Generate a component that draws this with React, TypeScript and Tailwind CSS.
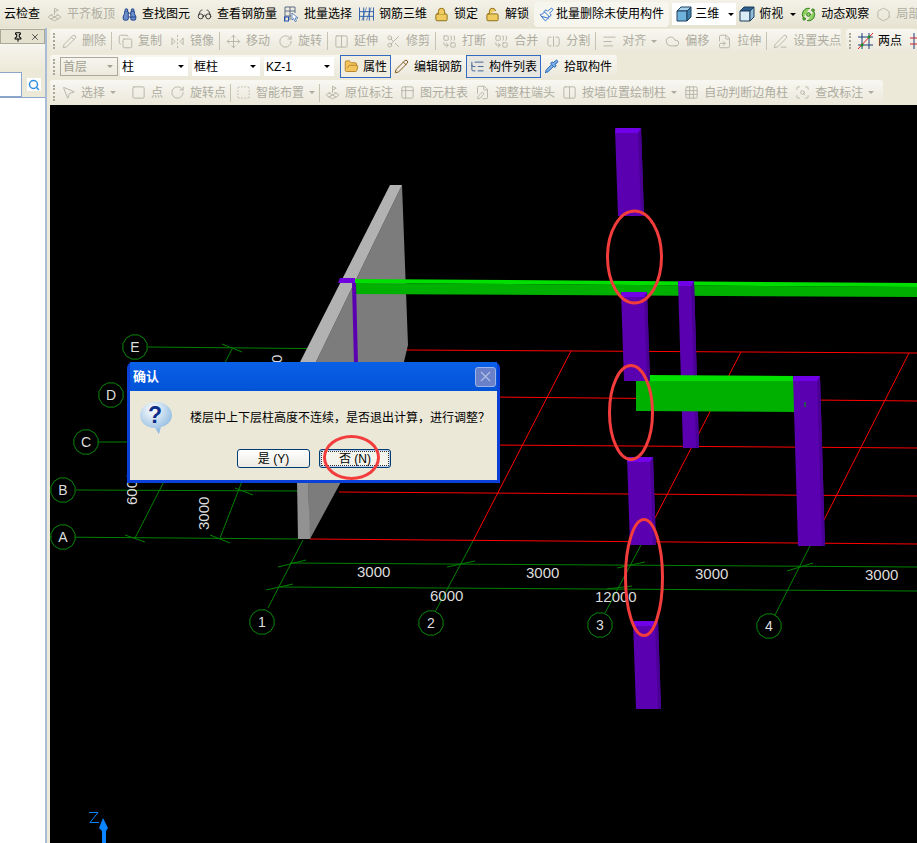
import React from "react";
import {
  Binoculars, Glasses, Lock, LockOpen, Paintbrush, Orbit, Pin, X, Search, MousePointer2,
  Pencil, Copy, FlipHorizontal2, Move, RotateCw, Scissors, Columns2, Combine, SquareSplitHorizontal, AlignLeft,
  Cloud, FileSymlink, Square, ListTree, Pipette, PenLine, FolderOpen, Table2, FileEdit, LandPlot, ScanSearch, SquareDashed, Grid3x3, Hexagon,
} from "lucide-react";

const font = "font-['Liberation_Sans','Noto_Sans_CJK_SC',sans-serif]";
const dark = "text-black";
type Icon = React.ComponentType<{ size?: number; className?: string; strokeWidth?: number }>;

// the program's raster icons that lucide has no match for
const Cube: Icon = () => (
  <svg width="16" height="16" viewBox="0 0 16 16" className="shrink-0">
    <polygon points="1,5 5,1 15,1 11,5" fill="#a8d4ee" stroke="#1c3f5c" />
    <polygon points="1,5 11,5 11,15 1,15" fill="#6fb2dc" stroke="#1c3f5c" />
    <polygon points="11,5 15,1 15,11 11,15" fill="#3f7faa" stroke="#1c3f5c" />
  </svg>
);
const TopView: Icon = () => (
  <svg width="16" height="16" viewBox="0 0 16 16" className="shrink-0">
    <polygon points="1,5 5,1 15,1 11,5" fill="#2f5f8c" stroke="#1c3f5c" />
    <polygon points="1,5 11,5 11,15 1,15" fill="#dcecf6" stroke="#1c3f5c" />
    <polygon points="11,5 15,1 15,11 11,15" fill="#8fbbd8" stroke="#1c3f5c" />
  </svg>
);
const BatchSelect: Icon = () => (
  <svg width="15" height="16" viewBox="0 0 15 16" className="shrink-0" fill="none">
    <path d="M1 1H11M1 5H11M1 10H7M1 1V14M6 1V14M11 1V7" stroke="#5a6b85" />
    <rect x="0.5" y="11" width="4" height="4" stroke="#1f4fb0" />
    <path d="M8 7L14 12H11L12.5 15L11 15.5L9.5 12.5L8 14Z" fill="#fff" stroke="#2a5cab" strokeWidth="0.7" />
  </svg>
);
const SteelGrid: Icon = () => (
  <svg width="15" height="16" viewBox="0 0 16 16" className="shrink-0" fill="none" stroke="#2a5cab">
    <path d="M0.5 1V15M5 1V15M11 1V15M15.5 1V15M0 5.5H16M0 10.5H16" />
    <path d="M3 15L8 1M8 15L13 1" strokeWidth="0.7" />
  </svg>
);
const TwoPoints: Icon = () => (
  <svg width="15" height="16" viewBox="0 0 15 16" className="shrink-0" fill="none">
    <path d="M4 0V16M11 0V16M0 4H15M0 12H15" stroke="#1c3f7c" />
    <path d="M0 16L15 0" stroke="#e02020" />
    <circle cx="4" cy="12" r="1.5" fill="#1f8a2a" />
    <circle cx="11" cy="4" r="1.5" fill="#1f8a2a" />
  </svg>
);
const RedGrid: Icon = () => (
  <svg width="15" height="16" viewBox="0 0 15 16" className="shrink-0" fill="none">
    <path d="M4 0V16M11 0V16" stroke="#1c3f7c" />
    <path d="M0 5H15M0 11H15" stroke="#d02030" />
  </svg>
);

function Grip() {
  return <span className="ml-[3px] mr-[1px] h-4 w-[2px] shrink-0 border-l-2 border-dotted border-[#a9a796]" />;
}

function Sep() {
  return <span className="h-[18px] w-px shrink-0 bg-[#c6c3b2]" />;
}

function Caret({ className = "" }: { className?: string }) {
  return <span className={`h-0 w-0 border-x-[3px] border-t-[3px] border-x-transparent border-t-current ${className}`} />;
}

function Tool({ icon: I, label, color = "text-[#b5b4a8]", text = "text-[#aeaca0]", caret, pad = "pl-[3px] pr-[2px]" }: { icon: Icon; label: string; color?: string; text?: string; caret?: boolean; pad?: string }) {
  return (
    <span className={`flex shrink-0 items-center gap-[5px] whitespace-nowrap text-[12px] leading-none ${pad} ${text}`}>
      <I size={15} className={`shrink-0 ${color}`} strokeWidth={1.5} />
      {label}
      {caret && <Caret />}
    </span>
  );
}

function TopTool(props: { icon: Icon; label: string; color?: string; text?: string; caret?: boolean }) {
  return <Tool {...props} pad="px-[2px]" />;
}

function Combo({ label, width, disabled }: { label: string; width: string; disabled?: boolean }) {
  return (
    <span className={`flex h-[19px] shrink-0 items-center justify-between px-[2px] text-[12px] leading-none ${width} ${disabled ? "border border-[#aca899] text-[#a19f90]" : "bg-white text-black"}`}>
      {label}
      <Caret className="mr-[2px]" />
    </span>
  );
}

function Strip({ className, children }: { className: string; children: React.ReactNode }) {
  return <div className={`flex items-center overflow-hidden rounded-[3px] bg-gradient-to-b from-[#f8f7f1] to-[#ebe8da] ${className}`}>{children}</div>;
}

function AxisBubble({ t, x, y }: { t: string; x: number; y: number }) {
  const pts = Array.from({ length: 12 }, (_, i) => {
    const a = (i * Math.PI) / 6 + Math.PI / 12;
    return `${x + 12.5 * Math.cos(a)},${y + 12.5 * Math.sin(a)}`;
  }).join(" ");
  return (
    <g>
      <polygon points={pts} fill="#000" stroke="#0a8a0a" />
      <text x={x} y={y + 5} textAnchor="middle" fontSize="14" fill="#ddd" fontFamily="Liberation Sans">{t}</text>
    </g>
  );
}

function Column({ a, b, c, d, drift }: { a: number; b: number; c: number; d: number; drift: number }) {
  return (
    <g>
      <polygon points={`${a},${b} ${c},${b} ${c + drift},${d} ${a + drift},${d}`} fill="#5a00b0" />
      <polygon points={`${c - 3},${b + 5} ${c},${b} ${c + drift},${d} ${c + drift - 3},${d}`} fill="#4a0094" />
      <polygon points={`${a + 1},${b} ${c},${b} ${c - 3},${b + 5} ${a},${b + 5}`} fill="#7000e8" />
    </g>
  );
}

const bubbles: [string, number, number][] = [["E", 135, 347], ["D", 111, 395], ["C", 86, 442], ["B", 63, 490], ["A", 63, 537], ["1", 262, 622], ["2", 431, 623], ["3", 600, 625], ["4", 769, 626]];

export default function App() {
  return (
    <div className={`${font} relative flex h-[843px] w-[917px] flex-col overflow-hidden bg-[#ece9d8]`}>
      {/* main menu toolbar */}
      <div className="flex h-[28px] shrink-0 items-center gap-[3px] overflow-hidden bg-gradient-to-b from-[#f4f2e8] to-[#e6e3d2] pl-[4px]">
        <span className="w-[38px] shrink-0 whitespace-nowrap text-[12px] text-black">云检查</span>
        <TopTool icon={LandPlot} label="平齐板顶" />
        <TopTool icon={Binoculars} label="查找图元" text={dark} color="fill-[#6a8fc8] text-[#1f3f8c]" />
        <TopTool icon={Glasses} label="查看钢筋量" text={dark} color="text-[#333]" />
        <TopTool icon={BatchSelect} label="批量选择" text={dark} />
        <TopTool icon={SteelGrid} label="钢筋三维" text={dark} />
        <TopTool icon={Lock} label="锁定" text={dark} color="fill-[#f0cc60] text-[#8a6a10]" />
        <TopTool icon={LockOpen} label="解锁" text={dark} color="fill-[#f0cc60] text-[#8a6a10]" />
        <span className="flex h-[25px] shrink-0 items-center rounded-sm bg-[#f6f5ee] pl-[3px] pr-[3px]">
          <span className="flex items-center gap-[2px] whitespace-nowrap px-[2px] text-[12px] text-black">
            <Paintbrush size={15} className="text-[#2a6ccb]" strokeWidth={1.5} />批量删除未使用构件
          </span>
        </span>
        <span className="flex h-[22px] w-[64px] shrink-0 items-center gap-[3px] bg-white pl-[4px] text-[12px] text-black">
          <Cube />三维
          <Caret className="ml-auto mr-[2px]" />
        </span>
        <span className="flex shrink-0 items-center gap-[4px] whitespace-nowrap text-[12px] text-black">
          <TopView />俯视
          <Caret className="ml-[3px]" />
        </span>
        <TopTool icon={Orbit} label="动态观察" text={dark} color="fill-[#8fd060] text-[#2c7a1a]" />
        <TopTool icon={Hexagon} label="局部" />
      </div>

      <div className="flex min-h-0 flex-1">
        {/* left dock panel */}
        <aside className="flex w-[50px] shrink-0 pr-[3px]">
          <div className="flex w-[47px] flex-col border-r-2 border-[#a8bcd6]">
            <div className="mt-[1px] flex h-[15px] shrink-0 items-center justify-end gap-[7px] border border-[#aca899] bg-[#e4e1cf] pr-[4px]">
              <Pin size={10} className="text-black" strokeWidth={2.5} />
              <X size={10} className="text-black" strokeWidth={1.5} />
            </div>
            <div className="h-[28px] shrink-0 bg-gradient-to-b from-[#f6f5ee] to-[#ece9d8]" />
            <div className="flex h-[25px] shrink-0 items-center bg-[#ece9d8]">
              <span className="h-[25px] w-[22px] border border-l-0 border-[#8aa6cc] bg-white" />
              <span className="ml-[5px] flex h-[13px] w-[14px] items-center justify-center bg-white"><Search size={12} className="text-[#2f8fe0]" strokeWidth={3} /></span>
            </div>
            <div className="flex-1 border-t border-[#8aa6cc] bg-white" />
          </div>
        </aside>

        <div className="flex min-w-0 flex-1 flex-col">
          {/* edit toolbar */}
          <div className="mt-[1px] flex h-[24px] shrink-0 gap-[5px]">
            <Strip className="w-[791px] gap-[3px]">
              <Grip />
              <Tool icon={Pencil} label="删除" />
              <Sep />
              <Tool icon={Copy} label="复制" />
              <Tool icon={FlipHorizontal2} label="镜像" />
              <Sep />
              <Tool icon={Move} label="移动" />
              <Tool icon={RotateCw} label="旋转" />
              <Sep />
              <Tool icon={Columns2} label="延伸" />
              <Tool icon={Scissors} label="修剪" />
              <Sep />
              <Tool icon={Combine} label="打断" />
              <Tool icon={Combine} label="合并" />
              <Tool icon={SquareSplitHorizontal} label="分割" />
              <Sep />
              <Tool icon={AlignLeft} label="对齐" caret />
              <Tool icon={Cloud} label="偏移" />
              <Tool icon={FileSymlink} label="拉伸" />
              <Sep />
              <Tool icon={PenLine} label="设置夹点" />
            </Strip>
            <Strip className="flex-1 gap-[3px]">
              <Grip />
              <Tool icon={TwoPoints} label="两点" text={dark} />
              <span className="ml-[3px]"><RedGrid /></span>
            </Strip>
          </div>

          {/* component selectors */}
          <Strip className="mt-[2px] h-[23px] w-[567px] shrink-0">
            <Grip />
            <span className="ml-[4px] flex items-center gap-[2px]">
              <Combo label="首层" width="w-[58px]" disabled />
              <Combo label="柱" width="w-[68px]" />
              <span className="ml-[2px]"><Combo label="框柱" width="w-[68px]" /></span>
              <span className="ml-[2px]"><Combo label="KZ-1" width="w-[70px]" /></span>
            </span>
            <span className="mx-[3px]"><Sep /></span>
            <span className="flex h-[23px] w-[51px] shrink-0 items-center gap-[4px] border border-[#316ac5] bg-[#f1eee0] px-[3px] text-[12px] text-black"><FolderOpen size={15} className="fill-[#f4c55c] text-[#b5812a]" strokeWidth={1.5} />属性</span>
            <Tool icon={Pencil} label="编辑钢筋" text={dark} color="text-[#7a4a10]" />
            <span className="ml-[2px] flex h-[23px] w-[75px] shrink-0 items-center gap-[4px] whitespace-nowrap border border-[#316ac5] bg-[#e7e6e0] px-[3px] text-[12px] text-black"><ListTree size={15} className="text-[#3b5f8f]" strokeWidth={1.5} />构件列表</span>
            <Tool icon={Pipette} label="拾取构件" text={dark} color="fill-[#7fb0e8] text-[#1c5fb0]" />
          </Strip>

          {/* draw toolbar */}
          <Strip className="mt-[2px] h-[25px] w-[833px] shrink-0 gap-[2px]">
            <Grip />
            <Tool icon={MousePointer2} label="选择" caret />
            <span className="ml-[4px]"><Sep /></span>
            <span className="ml-[2px]"><Tool icon={Square} label="点" /></span>
            <Tool icon={RotateCw} label="旋转点" />
            <Sep />
            <Tool icon={SquareDashed} label="智能布置" caret />
            <Sep />
            <Tool icon={LandPlot} label="原位标注" />
            <Tool icon={Table2} label="图元柱表" />
            <Tool icon={FileEdit} label="调整柱端头" />
            <Tool icon={Columns2} label="按墙位置绘制柱" caret />
            <Tool icon={Grid3x3} label="自动判断边角柱" />
            <Tool icon={ScanSearch} label="查改标注" caret />
          </Strip>

          {/* 3D view */}
          <svg viewBox="50 105 867 738" className="mt-0 block h-[738px] w-[867px] shrink-0 bg-black">
            <g stroke="#f00" fill="none">
              <path d="M406 350L917 353M490 397L917 401M490 445L917 448M339 492L917 496M310 539L917 544" />
              <path d="M571 351L473 541M741 352L655 518M909 353L824 520" />
            </g>
            <g stroke="#008000" fill="none">
              <path d="M148 347L352 349M98 442L130 442M76 490L298 491M50 537L298 539M290 563L917 567M280 587L917 591" />
              <path d="M232 349L135 538M262 430L220 538M303 540L268 608M473 541L435 612M641 545L605 613M810 546L775 615" />
              <path d="M222 344L242 352M235 488L253 495M125 535L145 542M210 535L230 543M278 567L306 560M266 590L293 584M447 567L475 561M617 568L645 562M787 571L813 563M607 589L632 586" />
            </g>
            {bubbles.map(([t, x, y]) => <AxisBubble key={t} t={t} x={x} y={y} />)}
            <g fontSize="15" fill="#ddd" fontFamily="Liberation Sans">
              <text x="357" y="577">3000</text>
              <text x="526" y="578">3000</text>
              <text x="695" y="579">3000</text>
              <text x="865" y="580">3000</text>
              <text x="430" y="601">6000</text>
              <text x="595" y="602">12000</text>
              <text transform="translate(209,530) rotate(-90)">3000</text>
              <text transform="translate(137,505) rotate(-90)">6000</text>
              <text transform="translate(282,388) rotate(-90)">6000</text>
            </g>
            {/* wall */}
            <polygon points="402,185 408,345 402,370 312,370" fill="#7c7c7c" />
            <polygon points="390,185 402,185 312,370 296,370" fill="#b2b2b2" />
            <polygon points="308,480 342,480 310,539 309,539" fill="#7c7c7c" />
            <polygon points="297,480 308,480 310,539 298,539" fill="#929292" />
            {/* beams and columns, back to front */}
            <polygon points="354,283 917,287 917,297 354,294" fill="#00b000" />
            <polygon points="354,279 917,283 917,287 354,283" fill="#00e000" />
            <polygon points="340,278 355,278 355,283 338,283" fill="#7000e0" />
            <polygon points="352,283 356,283 358,365 354,365" fill="#5a00b0" />
            <Column a={678} b={281} c={694} d={448} drift={5} />
            <polygon points="636,381 794,381 794,412 636,411" fill="#00b000" />
            <polygon points="648,375 796,376 794,381 635,381" fill="#00e000" />
            <Column a={615} b={128} c={641} d={216} drift={3} />
            <Column a={621} b={292} c={647} d={381} drift={3} />
            <Column a={793} b={376} c={820} d={546} drift={5} />
            <Column a={627} b={457} c={653} d={545} drift={3} />
            <Column a={633} b={621} c={658} d={709} drift={3} />
            <path d="M805 402V407" stroke="#00a000" />
            {/* red marks */}
            <g fill="none" stroke="#f33c3c" strokeWidth="3">
              <ellipse cx="634.5" cy="257" rx="27" ry="46" />
              <ellipse cx="631" cy="412.5" rx="21.5" ry="47" />
              <ellipse cx="644" cy="577.5" rx="18.5" ry="58" />
            </g>
            <path d="M89 812.5H98L90 822.5H99" stroke="#0a84ff" fill="none" />
            <polygon points="103,818 108,828 106,831 106,843 102,843 102,831 99,828" fill="#0a84ff" />
          </svg>
        </div>
      </div>

      {/* confirm dialog */}
      <div className="absolute left-[127px] top-[362px] flex h-[121px] w-[373px] flex-col rounded-t-[6px] bg-[#0a3fd8] px-[3px] pb-[3px]">
        <div className="flex h-[29px] shrink-0 items-center justify-between bg-gradient-to-b from-[#0a60e8] to-[#0353d6] pl-[3px] pr-[1px]">
          <span className="text-[13px] font-bold text-white">确认</span>
          <span className="flex h-[20px] w-[21px] items-center justify-center rounded-[3px] border border-[#9db4e8] bg-[#6a80c8]"><X size={17} className="text-[#b4c0e4]" strokeWidth={1.5} /></span>
        </div>
        <div className="flex flex-1 flex-col bg-[#ebe8d8] pl-[10px] pr-[8px]">
          <div className="mt-[11px] flex items-center">
            <svg width="32" height="32" viewBox="0 0 32 32" className="shrink-0">
              <defs>
                <radialGradient id="bubble" cx="0.4" cy="0.25" r="0.8">
                  <stop offset="0" stopColor="#fff" />
                  <stop offset="1" stopColor="#7fb0dc" />
                </radialGradient>
              </defs>
              <path d="M16 0C25 0 32 6 32 13C32 20 26 24 21 25L19 32L15 26C7 26 0 21 0 13C0 6 7 0 16 0Z" fill="url(#bubble)" />
              <text x="15" y="21" textAnchor="middle" fontSize="23" fontWeight="bold" fill="#0c2f8a" fontFamily="Liberation Sans">?</text>
            </svg>
            <span className="ml-[18px] whitespace-nowrap text-[12px] text-black">楼层中上下层柱高度不连续，是否退出计算，进行调整？</span>
          </div>
          <div className="ml-[97px] mt-[15px] flex gap-[9px]">
            <span className="flex h-[19px] w-[73px] items-center justify-center rounded-[3px] border border-[#003c74] bg-gradient-to-b from-white to-[#ecebe3] text-[12px] text-black">是 (Y)</span>
            <span className="flex h-[19px] w-[72px] items-stretch rounded-[3px] border border-[#003c74] bg-[#bcd0ee] p-[1px]">
              <span className="flex flex-1 items-center justify-center border border-dotted border-[#333] bg-[#f4f3ec] text-[12px] text-black">否 (N)</span>
            </span>
          </div>
        </div>
      </div>
      {/* annotation ring on the No button */}
      <span className="absolute left-[323px] top-[435px] h-[45px] w-[57px] rounded-[50%] border-[3px] border-[#f33c3c]" />
    </div>
  );
}
